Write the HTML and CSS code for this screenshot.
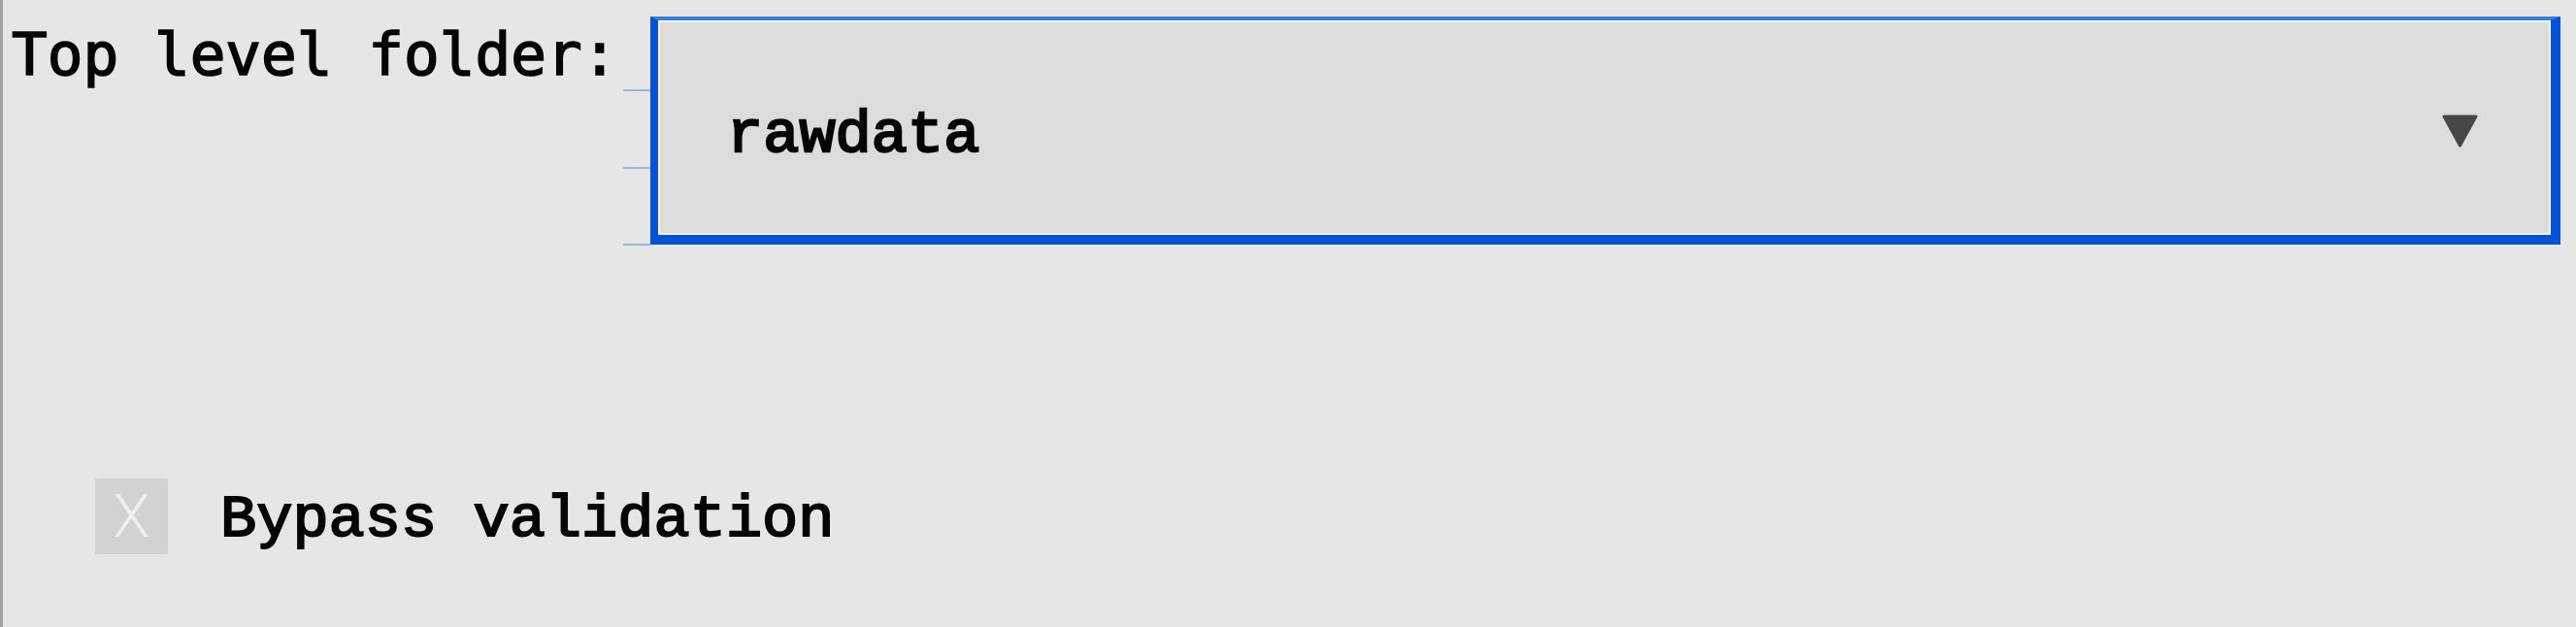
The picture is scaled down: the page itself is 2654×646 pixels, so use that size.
FILE: index.html
```html
<!DOCTYPE html>
<html lang="en">
<head>
<meta charset="utf-8">
<title>Top level folder</title>
<link rel="stylesheet" href="styles.css">
</head>
<body>
<div class="panel">
  <div class="folder-row">
    <div class="label">Top level folder:</div>
    <div class="ticks"><span class="tick"></span><span class="tick"></span><span class="tick"></span></div>
    <div class="combo">
      <div class="combo-inner">
        <span class="combo-value">rawdata</span>
        <svg class="combo-arrow" width="37" height="34" viewBox="0 0 37 34" aria-hidden="true"><polygon points="2,2 35,2 18.5,32" fill="#474747" stroke="#474747" stroke-width="3" stroke-linejoin="round"/></svg>
      </div>
    </div>
  </div>
  <div class="check-row">
    <div class="checkbox"><span class="check-mark">X</span></div>
    <div class="check-label">Bypass validation</div>
  </div>
</div>
</body>
</html>
```

FILE: styles.css
```css
html, body {
  margin: 0;
  padding: 0;
  background: #e6e6e6;
}

.panel {
  box-sizing: border-box;
  height: 646px;
  border-left: 3px solid #9f9f9f;
  padding-left: 9px;
  display: flex;
  flex-direction: column;
}

.folder-row {
  display: flex;
  align-items: flex-start;
  padding-top: 17px;
  margin-right: 16px;
}

.label {
  font-family: "DejaVu Sans Mono", monospace;
  font-size: 61px;
  line-height: 61px;
  color: #050505;
  -webkit-text-stroke: 1.6px #050505;
  margin-top: 8px;
  white-space: nowrap;
  width: 624px;
}

.ticks {
  width: 28px;
  height: 161px;
  margin-left: 6px;
  margin-top: 75px;
  display: flex;
  flex-direction: column;
  justify-content: space-between;
}

.tick {
  display: block;
  height: 2px;
  background: #92bbe8;
}

.combo {
  flex: 1;
  box-sizing: border-box;
  height: 235px;
  border-style: solid;
  border-color: #0052d6;
  border-top-color: #2f7ee0;
  border-width: 4px 10px 10px 8px;
  background: #f6f2ec;
  padding: 2px;
}

.combo-inner {
  box-sizing: border-box;
  height: 100%;
  background: #dcdcdc;
  border-radius: 3px;
  display: flex;
  align-items: flex-start;
  justify-content: space-between;
  padding: 0 73px 0 69px;
}

.combo-value {
  font-family: "Liberation Mono", monospace;
  font-size: 62px;
  line-height: 62px;
  color: #050505;
  -webkit-text-stroke: 2.4px #050505;
  margin-top: 86px;
}

.combo-arrow {
  display: block;
  margin-top: 95px;
}

.check-row {
  display: flex;
  align-items: flex-start;
  margin-top: 240px;
  margin-left: 86px;
}

.checkbox {
  width: 75px;
  height: 78px;
  background: #d2d2d2;
  display: flex;
  align-items: center;
  justify-content: center;
}

.check-mark {
  font-family: Roboto, "Liberation Sans", sans-serif;
  font-weight: 300;
  font-size: 62px;
  line-height: 62px;
  color: #efefef;
}

.check-label {
  font-family: "Liberation Mono", monospace;
  font-size: 62px;
  line-height: 62px;
  color: #050505;
  -webkit-text-stroke: 2px #050505;
  margin-left: 54px;
  margin-top: 12px;
  white-space: nowrap;
}
```
